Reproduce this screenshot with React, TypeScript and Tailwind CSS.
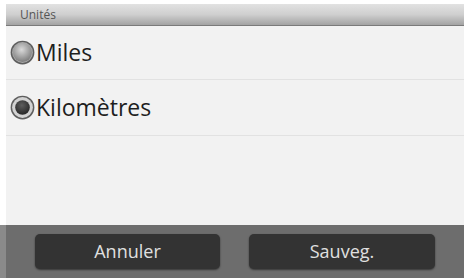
import React from "react";

function Radio({ checked }: { checked: boolean }) {
  return (
    <svg width="25" height="25" viewBox="0 0 24 24" className="shrink-0">
      <defs>
        <radialGradient id={checked ? "gc" : "gu"} cx="45%" cy="35%" r="65%">
          <stop offset="0%" stopColor={checked ? "#5e5e5e" : "#dadada"} />
          <stop offset="100%" stopColor={checked ? "#262626" : "#7e7e7e"} />
        </radialGradient>
      </defs>
      <circle cx="12" cy="12" r="11.4" fill="#5e5e5e" />
      <circle cx="12" cy="12" r="10" fill={checked ? "#d2d2d2" : "#a8a8a8"} />
      <circle cx="12" cy="12" r={checked ? 7 : 9} fill={`url(#${checked ? "gc" : "gu"})`} />
    </svg>
  );
}

export default function App() {
  const font = { fontFamily: '"Open Sans", "Noto Sans", sans-serif' };
  return (
    <div className="w-[464px] h-[278px] bg-white flex flex-col overflow-hidden" style={font}>
      <div className="h-[4px] bg-white" />
      <div className="flex-1 flex flex-col pl-[6px]">
        <div className="h-[22px] bg-gradient-to-b from-[#e2e2e2] via-[#cfcfcf] to-[#a3a3a3] border-b border-[#7a7a7a] flex items-center pl-[14px]">
          <span className="text-[12px] text-[#555] leading-none">Unités</span>
        </div>
        <div className="flex-1 bg-[#f2f2f2] flex flex-col">
          <div className="h-[54px] flex items-center pl-[4px] border-b border-[#e2e2e2]">
            <Radio checked={false} />
            <span className="text-[23px] text-[#1e1e1e] leading-none ml-[1px]">Miles</span>
          </div>
          <div className="h-[56px] flex items-center pl-[4px] border-b border-[#e2e2e2]">
            <Radio checked={true} />
            <span className="text-[23px] text-[#1e1e1e] leading-none ml-[1px]">Kilomètres</span>
          </div>
        </div>
      </div>
      <div className="h-[53px] flex bg-[#6d6d6d]">
        <div className="w-[6px] bg-[#8a8a8a]" />
        <div className="flex-1 flex items-center pl-[29px] gap-[29px]">
          <button className="w-[185px] h-[35px] rounded-[5px] bg-[#333333] text-[#e0e0e0] text-[18px] shadow-[0_1px_2px_rgba(0,0,0,0.5)]">
            Annuler
          </button>
          <button className="w-[186px] h-[35px] rounded-[5px] bg-[#333333] text-[#e0e0e0] text-[18px] shadow-[0_1px_2px_rgba(0,0,0,0.5)]">
            Sauveg.
          </button>
        </div>
      </div>
    </div>
  );
}
